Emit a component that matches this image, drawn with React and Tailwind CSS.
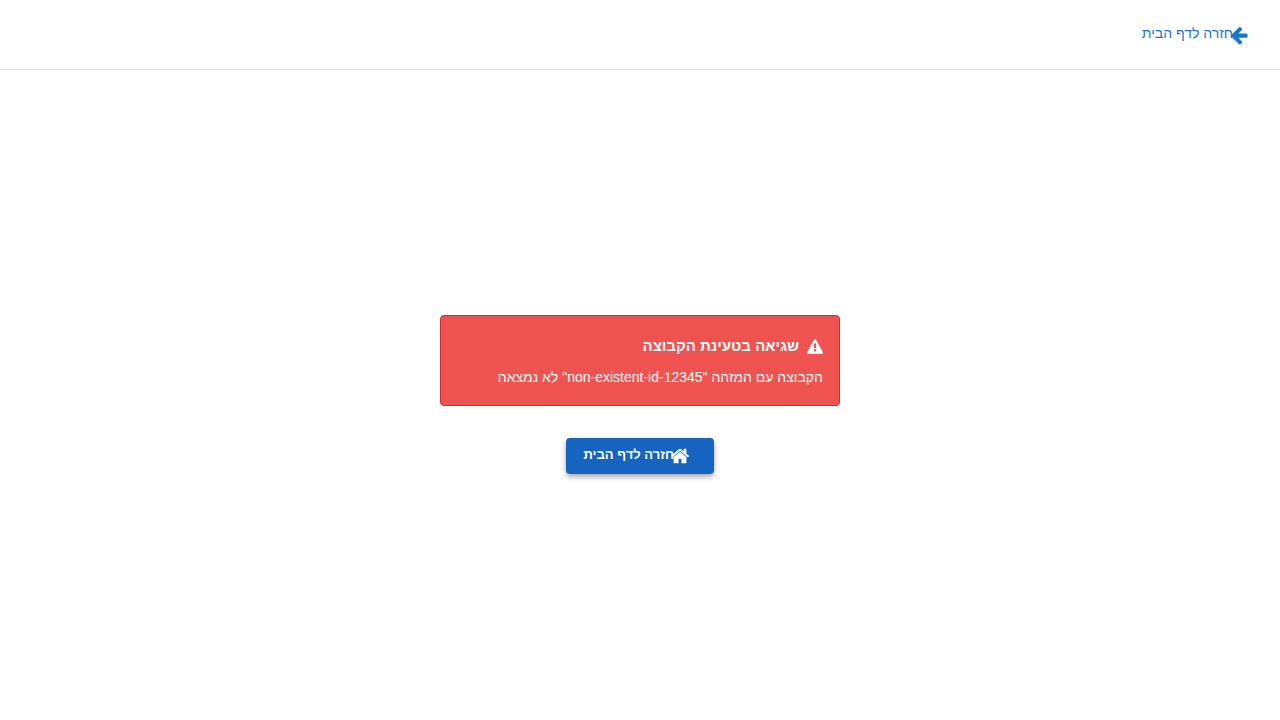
const ICONS = {
  home: "M1472 992v480q0 26-19 45t-45 19h-384v-384h-256v384h-384q-26 0-45-19t-19-45v-480q0-1 .5-3t.5-3l575-474 575 474q1 2 1 6zm223-69l-62 74q-8 9-21 11h-3q-13 0-21-7l-692-577-692 577q-12 8-24 7-13-2-21-11l-62-74q-8-10-7-23.5t11-21.5l719-599q32-26 76-26t76 26l244 204v-195q0-14 9-23t23-9h192q14 0 23 9t9 23v408l219 182q10 8 11 21.5t-7 23.5z",
  arrowLeft: "M1664 896v128q0 53-32.500 90.500t-84.500 37.500h-704l293 294q38 36 38 90t-38 90l-75 76q-37 37-90 37-52 0-91-37l-651-652q-37-37-37-90 0-52 37-91l651-650q38-38 91-38 52 0 90 38l75 74q38 38 38 91t-38 91l-293 293h704q52 0 84.500 37.500t32.500 90.500z",
  warning: "M1024 1375v-190q0-14-9.500-23.500t-22.500-9.500h-192q-13 0-22.500 9.500t-9.500 23.500v190q0 14 9.500 23.500t22.500 9.500h192q13 0 22.500-9.500t9.500-23.500zm-2-374l18-459q0-12-10-19-13-11-24-11h-220q-11 0-24 11-10 7-10 21l17 457q0 10 10 16.500t24 6.500h185q14 0 23.500-6.500t10.500-16.500zm-14-934l768 1408q35 63-2 126-17 29-46.500 46t-63.500 17h-1536q-34 0-63.500-17t-46.500-46q-37-63-2-126l768-1408q17-31 47-49t65-18 65 18 47 49z",
};

function Icon({ name, className }) {
  return (
    <svg viewBox="0 0 1792 1792" fill="currentColor" aria-hidden="true" className={className}>
      <path d={ICONS[name]} />
    </svg>
  );
}

function Header() {
  return (
    <header className="flex h-[70px] items-center border-b border-[#e0e0e0] px-6">
      <a href="/" className="flex h-9 items-center rounded px-[7px] text-sm font-medium text-[#1976d2]">
        <Icon name="arrowLeft" className="-ml-1 size-5 shrink-0" />
        <span className="pb-1">חזרה לדף הבית</span>
      </a>
    </header>
  );
}

function ErrorAlert() {
  return (
    <div role="alert" className="w-full max-w-[400px] rounded border border-[#d32f2f] bg-[#ef5350] p-4 text-white">
      <div className="mb-1.5 flex items-center gap-2">
        <Icon name="warning" className="mt-0.5 size-4" />
        <h1 className="text-[15px] leading-7 font-bold">שגיאה בטעינת הקבוצה</h1>
      </div>
      <p className="text-sm leading-[23px] font-medium">הקבוצה עם המזהה "non-existent-id-12345" לא נמצאה</p>
    </div>
  );
}

export default function App() {
  return (
    <div dir="rtl" className="flex min-h-screen flex-col bg-white font-['Liberation_Sans',Arial,sans-serif]">
      <Header />
      <main className="flex grow flex-col items-center justify-center gap-8 pb-0.5">
        <ErrorAlert />
        <button type="button" className="flex h-9 min-w-[148px] items-center rounded bg-[#1565c0] pr-6 pl-4 text-[13px] font-bold text-white shadow-[0_2px_4px_-1px_rgba(0,0,0,0.2),0_4px_5px_rgba(0,0,0,0.14),0_1px_10px_rgba(0,0,0,0.12)]">
          <Icon name="home" className="-ml-1 size-5 shrink-0" />
          <span className="pb-0.5">חזרה לדף הבית</span>
        </button>
      </main>
    </div>
  );
}
